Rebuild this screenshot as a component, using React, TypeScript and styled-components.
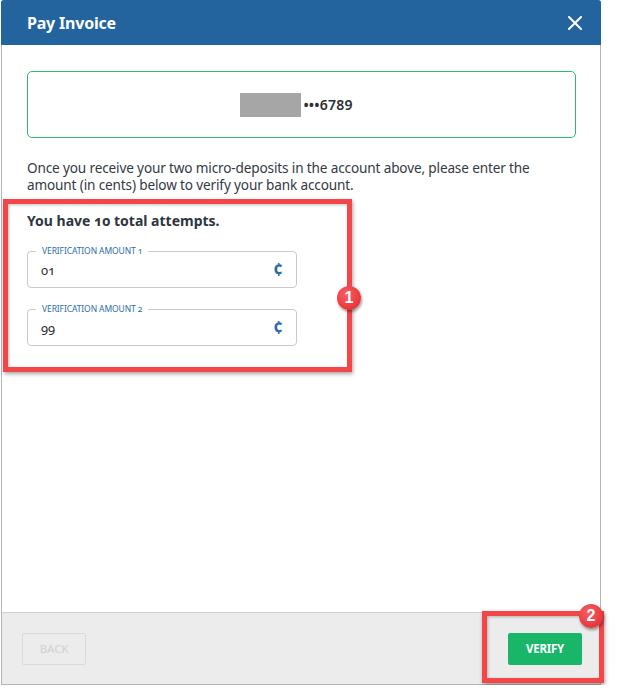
import styled, { createGlobalStyle } from 'styled-components';

const GlobalStyle = createGlobalStyle`
  html, body {
    margin: 0;
    padding: 0;
    background: #ffffff;
  }
  body {
    font-family: "Noto Sans", "Liberation Sans", sans-serif;
    font-variant-numeric: oldstyle-nums;
    color: #333a44;
  }
`;

interface CalloutProps {
  $top: number;
  $left: number;
  $width: number;
  $height: number;
}

interface BadgeProps {
  $top: number;
  $right: number;
}

const App = () => {
  return (
    <>
      <GlobalStyle />
      <Modal>
        <Header>
          <Title>Pay Invoice</Title>
          <CloseButton aria-label="Close">
            <svg width="14" height="14" viewBox="0 0 14 14">
              <path d="M1 1L13 13M13 1L1 13" stroke="#ffffff" strokeWidth="2" strokeLinecap="square" />
            </svg>
          </CloseButton>
        </Header>

        <Body>
          <AccountCard>
            <BankMask />
            <AccountNumber>•••6789</AccountNumber>
          </AccountCard>

          <Intro>
            Once you receive your two micro-deposits in the account above, please enter the amount (in cents) below to verify your bank account.
          </Intro>

          <Attempts>You have 10 total attempts.</Attempts>

          <Fields>
            <Field>
              <FieldLabel>Verification Amount 1</FieldLabel>
              <FieldValue>01</FieldValue>
              <Cent>¢</Cent>
            </Field>
            <Field>
              <FieldLabel>Verification Amount 2</FieldLabel>
              <FieldValue>99</FieldValue>
              <Cent>¢</Cent>
            </Field>
          </Fields>
        </Body>

        <Footer>
          <BackButton disabled>Back</BackButton>
          <VerifyButton>Verify</VerifyButton>
        </Footer>

        <Callout $top={199} $left={1} $width={349} $height={173}>
          <Badge $top={82} $right={-14}>1</Badge>
        </Callout>
        <Callout $top={611} $left={480} $width={122} $height={72}>
          <Badge $top={-12} $right={-4}>2</Badge>
        </Callout>
      </Modal>
    </>
  );
}

const Modal = styled.div`
  position: relative;
  box-sizing: border-box;
  margin-left: 1px;
  width: 600px;
  height: 685px;
  display: flex;
  flex-direction: column;
  background: #ffffff;
  border-left: 1px solid #b4b4b4;
  border-right: 1px solid #b4b4b4;
  border-bottom: 1px solid #b4b4b4;
  border-radius: 3px 3px 0 0;
`;

const Header = styled.div`
  height: 45px;
  flex-shrink: 0;
  display: flex;
  align-items: center;
  justify-content: space-between;
  padding: 0 19px 0 26px;
  background: #23649f;
  border-radius: 3px 3px 0 0;
  margin: 0 -1px;
`;

const Title = styled.h1`
  margin: 0;
  font-size: 16px;
  font-weight: 700;
  color: #ffffff;
  letter-spacing: -0.2px;
`;

const CloseButton = styled.button`
  border: 0;
  padding: 0;
  background: none;
  width: 14px;
  height: 14px;
  display: flex;
  cursor: pointer;
`;

const Body = styled.div`
  flex: 1;
  padding: 26px 24px 0 25px;
`;

const AccountCard = styled.div`
  box-sizing: border-box;
  height: 67px;
  display: flex;
  align-items: center;
  justify-content: center;
  gap: 2px;
  padding-right: 10px;
  border: 1px solid #2fba70;
  border-radius: 5px;
`;

const BankMask = styled.div`
  width: 61px;
  height: 24px;
  background: #a6a6a6;
`;

const AccountNumber = styled.span`
  font-size: 14px;
  font-weight: 600;
  color: #2b2f36;
  font-variant-numeric: lining-nums;
  letter-spacing: 0.2px;
`;

const Intro = styled.p`
  margin: 21px 0 0;
  font-size: 13.6px;
  line-height: 17px;
  color: #333a44;
  letter-spacing: -0.15px;
`;

const Attempts = styled.div`
  margin-top: 19px;
  font-size: 14px;
  font-weight: 700;
  line-height: 18px;
  color: #2e3540;
`;

const Fields = styled.div`
  margin-top: 21px;
  display: flex;
  flex-direction: column;
  gap: 21px;
`;

const Field = styled.div`
  position: relative;
  box-sizing: border-box;
  width: 270px;
  height: 37px;
  display: flex;
  align-items: center;
  justify-content: space-between;
  padding: 0 13px 0 13px;
  border: 1px solid #c9c9c9;
  border-radius: 4px;
`;

const FieldLabel = styled.span`
  position: absolute;
  top: -7px;
  left: 8px;
  padding: 0 6px;
  background: #ffffff;
  font-size: 8.5px;
  line-height: 12px;
  text-transform: uppercase;
  color: #2d6ca8;
  letter-spacing: -0.1px;
`;

const FieldValue = styled.span`
  font-size: 13px;
  color: #2b2f36;
`;

const Cent = styled.span`
  font-size: 17px;
  font-weight: 700;
  line-height: 1;
  color: #2d6ca8;
`;

const Footer = styled.div`
  height: 72px;
  flex-shrink: 0;
  box-sizing: border-box;
  display: flex;
  align-items: center;
  justify-content: space-between;
  padding: 0 18px 0 20px;
  background: #ececec;
  border-top: 1px solid #cfcfcf;
`;

const FooterButton = styled.button`
  height: 32px;
  border-radius: 2px;
  font-family: "Noto Sans", "Liberation Sans", sans-serif;
  font-size: 11.5px;
  font-weight: 700;
  text-transform: uppercase;
  letter-spacing: -0.2px;
`;

const BackButton = styled(FooterButton)`
  width: 64px;
  background: transparent;
  border: 1px solid #dadada;
  color: #d4d4d4;
  font-weight: 500;
`;

const VerifyButton = styled(FooterButton)`
  width: 74px;
  background: #19b66a;
  border: 0;
  color: #ffffff;
  cursor: pointer;
`;

const Callout = styled.div<CalloutProps>`
  position: absolute;
  top: ${p => p.$top}px;
  left: ${p => p.$left}px;
  width: ${p => p.$width}px;
  height: ${p => p.$height}px;
  box-sizing: border-box;
  border: 5px solid #f24649;
  box-shadow: 1px 2px 4px rgba(0, 0, 0, 0.35), inset 1px 1px 3px rgba(0, 0, 0, 0.25);
  pointer-events: none;
`;

const Badge = styled.div<BadgeProps>`
  position: absolute;
  top: ${p => p.$top}px;
  right: ${p => p.$right}px;
  width: 24px;
  height: 24px;
  border-radius: 50%;
  display: flex;
  align-items: center;
  justify-content: center;
  background: radial-gradient(circle at 40% 35%, #f86064 0%, #e8363b 70%, #d42b30 100%);
  box-shadow: 1px 2px 3px rgba(0, 0, 0, 0.4);
  font-family: "Liberation Sans", Arial, sans-serif;
  font-size: 16px;
  font-weight: 700;
  color: #ffffff;
  font-variant-numeric: lining-nums;
`;

export default App;
